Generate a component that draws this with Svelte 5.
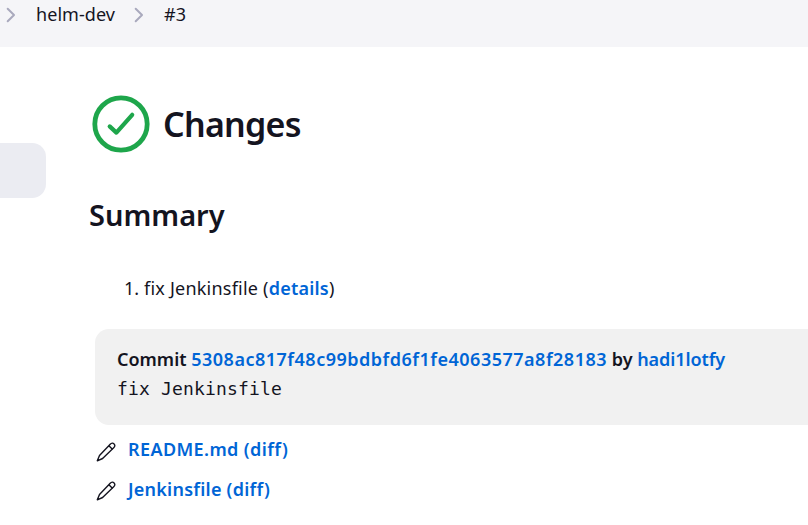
<script>
  const files = ['README.md', 'Jenkinsfile'];
</script>

{#snippet chevron()}
  <svg class="chevron" viewBox="0 0 10 16" aria-hidden="true">
    <path d="M1.7 1.8 8 8 1.7 14.2" fill="none" stroke="#a9a9bd" stroke-width="2" stroke-linecap="round" stroke-linejoin="round" />
  </svg>
{/snippet}

<div class="page">
  <nav class="crumbs">
    {@render chevron()}
    <span class="project">helm-dev</span>
    {@render chevron()}
    <span class="build">#3</span>
  </nav>

  <div class="body">
    <aside><div class="task"></div></aside>
    <main>
      <h1>
        <svg class="status" viewBox="0 0 58 58" aria-hidden="true">
          <circle cx="29" cy="29" r="26.2" fill="none" stroke="#1ea64b" stroke-width="4.8" />
          <path d="M17.7 31.4 24.4 37.6 40.2 19.8" fill="none" stroke="#1ea64b" stroke-width="4.2" stroke-linecap="round" stroke-linejoin="round" />
        </svg>
        <span>Changes</span>
      </h1>
      <h2>Summary</h2>
      <div class="entry"><span class="num">1.</span><span class="msg">fix Jenkinsfile (<a href="#detail0">details</a>)</span></div>

      <section class="commit" id="detail0">
        <div class="title">Commit <a class="hash" href="#commit">5308ac817f48c99bdbfd6f1fe4063577a8f28183</a> by <a class="author" href="#author">hadi1lotfy</a></div>
        <pre>fix Jenkinsfile</pre>
      </section>

      {#each files as file}
        <div class="file">
          <svg class="pencil" viewBox="0 0 20 20" aria-hidden="true">
            <path d="M14.2 2.3C15.5.9 17 .8 18.1 1.9s1 2.6-.4 3.9L6.6 16.5 1.3 18.8 3.5 13.4ZM12.9 3.7 16.4 7.2" fill="none" stroke="#14141f" stroke-width="1.4" stroke-linecap="round" stroke-linejoin="round" />
          </svg>
          <a class:readme={file === 'README.md'} href="#diff">{file} (diff)</a>
        </div>
      {/each}
    </main>
  </div>
</div>

<style>
  .page {
    width: 808px;
    height: 525px;
    overflow: hidden;
    background: #fff;
    color: #14141f;
    font: 18px/28px "Noto Sans", sans-serif;
  }
  a { color: #0065d6; font-weight: 600; text-decoration: none; }
  .crumbs {
    display: flex;
    align-items: flex-start;
    box-sizing: border-box;
    height: 47px;
    padding-left: 6px;
    background: #f5f5f8;
    white-space: nowrap;
  }
  .chevron { width: 10px; height: 16px; margin-top: 7px; }
  .project { width: 98px; margin-left: 20px; letter-spacing: 0.05px; }
  .build { margin-left: 20px; }
  .body { display: flex; }
  aside { flex: none; width: 90px; padding-top: 96px; }
  .task { width: 46px; height: 55px; border-radius: 0 14px 14px 0; background: #ebecf2; }
  main { flex: 1; min-width: 0; white-space: nowrap; }
  h1, h2, pre { margin: 0; }
  h1 {
    display: flex;
    align-items: center;
    gap: 13px;
    height: 58px;
    padding: 48px 0 0 2px;
    font-size: 34px;
    font-weight: 600;
    line-height: 58px;
    letter-spacing: -0.75px;
  }
  .status { width: 58px; height: 58px; }
  h2 { margin: 42px 0 0 -1px; font-size: 29px; font-weight: 600; line-height: 40px; }
  .entry { display: flex; margin: 39px 0 0 34px; }
  .num { width: 20px; }
  .msg { letter-spacing: 0.22px; }
  .commit {
    box-sizing: border-box;
    height: 96px;
    margin: 27px 0 0 5px;
    padding: 16px 0 0 22px;
    border-radius: 14px 0 0 14px;
    background: #f1f1f1;
  }
  .title { font-weight: 600; }
  .hash { letter-spacing: 0.5px; }
  .author { letter-spacing: -0.08px; }
  pre { font: 18px/30px "DejaVu Sans Mono", monospace; letter-spacing: 0.16px; padding-top: 1px; }
  .file { display: flex; height: 30px; padding: 10px 0 0 6px; letter-spacing: 0.24px; }
  .readme { letter-spacing: 0.4px; }
  .pencil { width: 20px; height: 20px; margin: 7px 12px 0 0; }
  .file + .file .pencil { margin-top: 6px; }
</style>
